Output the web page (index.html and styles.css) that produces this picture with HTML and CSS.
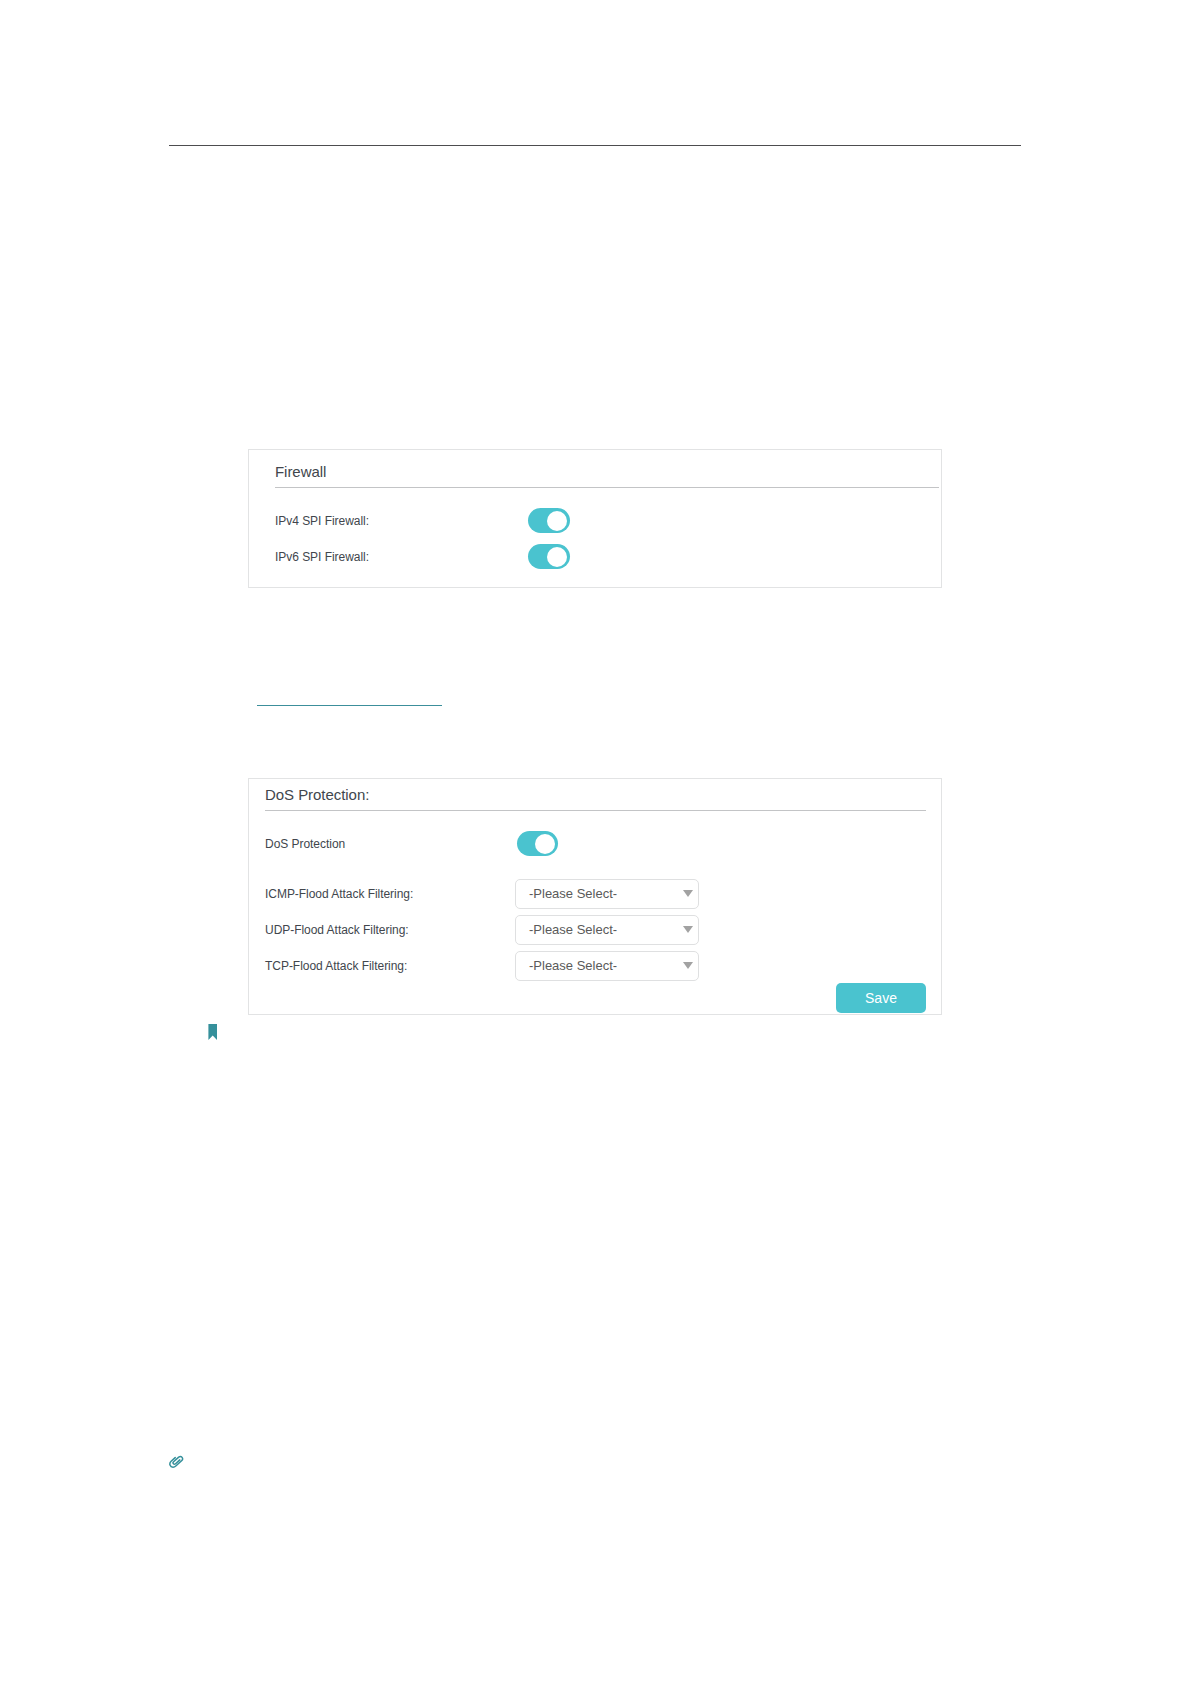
FILE: index.html
```
<!DOCTYPE html>
<html lang="en">
<head>
    <meta charset="UTF-8">
    <meta name="viewport" content="width=device-width, initial-scale=1.0">
    <title>Firewall and DoS Protection</title>
    <link rel="stylesheet" href="styles.css">
</head>
<body>
    <main class="page">
        <hr class="page-rule">

        <section class="panel firewall">
            <h2>Firewall</h2>
            <div class="row">
                <span class="label">IPv4 SPI Firewall:</span>
                <span class="toggle" role="switch" aria-checked="true"></span>
            </div>
            <div class="row">
                <span class="label">IPv6 SPI Firewall:</span>
                <span class="toggle" role="switch" aria-checked="true"></span>
            </div>
        </section>

        <div class="link-line"></div>

        <section class="panel dos">
            <h2>DoS Protection:</h2>
            <div class="row row-toggle">
                <span class="label">DoS Protection</span>
                <span class="toggle" role="switch" aria-checked="true"></span>
            </div>
            <div class="row">
                <span class="label">ICMP-Flood Attack Filtering:</span>
                <div class="select">-Please Select-<span class="arrow"></span></div>
            </div>
            <div class="row">
                <span class="label">UDP-Flood Attack Filtering:</span>
                <div class="select">-Please Select-<span class="arrow"></span></div>
            </div>
            <div class="row">
                <span class="label">TCP-Flood Attack Filtering:</span>
                <div class="select">-Please Select-<span class="arrow"></span></div>
            </div>
            <button class="save" type="button">Save</button>
        </section>

        <svg class="bookmark" width="9" height="16" viewBox="0 0 9 16">
            <path d="M.4 0H9v16l-4.300-4.500L.4 16z" fill="#35909b"/>
        </svg>

        <svg class="clip" width="16" height="14" viewBox="0 0 16 14" fill="none" stroke="#35909b" stroke-width="1.5" stroke-linecap="round" stroke-linejoin="round">
            <path d="M6.2 2.6L2.1 6.3C-.3 8.6 1 12.2 4 12.2c1.3 0 2.2-.6 3.1-1.4l5.5-5C15 3.600 12.400.2 9.700 2.100L4.600 6.700c-1.500 1.500.4 3.400 2 2L10.800 4.900"/>
        </svg>
    </main>
</body>
</html>
```

FILE: styles.css
```
* {
    box-sizing: border-box;
}

body {
    margin: 0;
    background: #fff;
    color: #41464d;
    font-family: "Liberation Sans", Arial, sans-serif;
    font-size: 12px;
}

.page {
    display: flex;
    flex-direction: column;
    height: 1684px;
    padding: 145px 169px 0;
}

.page-rule {
    width: 852px;
    height: 1px;
    margin: 0;
    border: 0;
    background: #4d4d4f;
}

.panel {
    width: 694px;
    margin-left: 79px;
    border: 1px solid #e2e3e4;
}

.panel h2 {
    margin: 0;
    border-bottom: 1px solid #c3c4c6;
    font-size: 15px;
    font-weight: normal;
    letter-spacing: -0.05px;
    line-height: 20px;
}

.row {
    display: flex;
    align-items: center;
}

.label {
    letter-spacing: -0.04px;
}

.toggle {
    display: flex;
    align-items: center;
    justify-content: flex-end;
    width: 42px;
    height: 25px;
    padding-right: 3px;
    border-radius: 13px;
    background: #4ac3cf;
}

.toggle::after {
    content: "";
    width: 20px;
    height: 20px;
    border-radius: 50%;
    background: #fff;
}

/* Firewall panel */
.firewall {
    height: 139px;
    margin-top: 303px;
    padding: 12px 2px 0 26px;
}

.firewall h2 {
    height: 26px;
    margin-bottom: 20px;
}

.firewall .row {
    height: 25px;
    margin-bottom: 11px;
}

.firewall .label {
    width: 253px;
}

.link-line {
    width: 185px;
    height: 1px;
    margin: 117px 0 0 88px;
    background: #3c8f9b;
}

/* DoS panel */
.dos {
    display: flex;
    flex-direction: column;
    height: 237px;
    margin-top: 72px;
    padding: 6px 15px 0 16px;
}

.dos h2 {
    height: 26px;
    margin-bottom: 20px;
}

.dos .label {
    width: 250px;
}

.dos .row {
    height: 30px;
    margin-bottom: 6px;
}

.dos .row-toggle {
    height: 25px;
    margin-bottom: 23px;
}

.dos .toggle {
    width: 41px;
    margin-left: 2px;
}

.select {
    display: flex;
    align-items: center;
    justify-content: space-between;
    width: 184px;
    height: 30px;
    padding: 0 5px 1px 13px;
    border: 1px solid #dfe0e1;
    border-radius: 5px;
    color: #5a5a5a;
    font-size: 13px;
}

.arrow {
    border: 5px solid transparent;
    border-top: 7px solid #a2a2a2;
    border-bottom: 0;
}

.save {
    align-self: flex-end;
    width: 90px;
    height: 30px;
    margin-top: -4px;
    padding: 0;
    border: 0;
    border-radius: 5px;
    background: #4ac3cf;
    color: #fff;
    font-family: inherit;
    font-size: 14px;
}

.bookmark {
    margin: 9px 0 0 39px;
}

.clip {
    margin-top: 415px;
}
```
